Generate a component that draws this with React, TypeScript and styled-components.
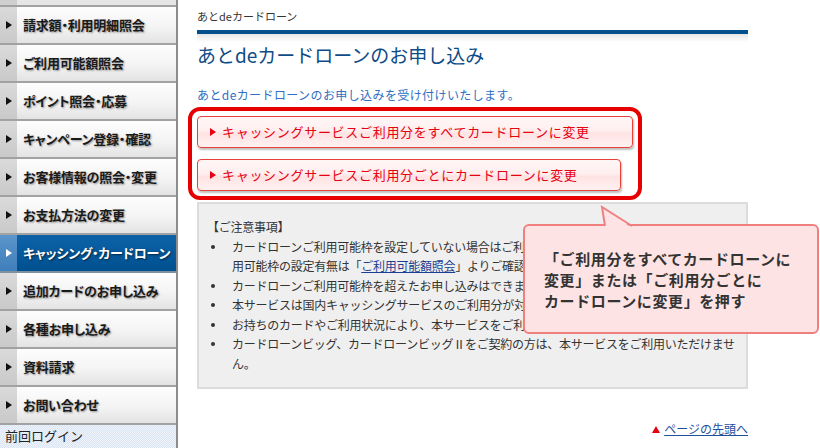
import React from "react"
import styled, { createGlobalStyle } from "styled-components"

const GlobalStyle = createGlobalStyle`
  html, body {
    margin: 0;
    padding: 0;
    background: #fff;
    overflow: hidden;
  }
  body {
    font-family: "Noto Sans CJK JP", "Noto Sans", sans-serif;
    color: #333;
  }
`

const navItems = [
  "請求額・利用明細照会",
  "ご利用可能額照会",
  "ポイント照会・応募",
  "キャンペーン登録・確認",
  "お客様情報の照会・変更",
  "お支払方法の変更",
  "キャッシング・カードローン",
  "追加カードのお申し込み",
  "各種お申し込み",
  "資料請求",
  "お問い合わせ",
]
const activeIndex = 6

const Page = styled.div`
  display: flex;
  width: 820px;
  height: 448px;
`

const Sidebar = styled.nav`
  width: 176px;
  flex-shrink: 0;
  display: flex;
  flex-direction: column;
  border-right: 2px solid #8c8c8c;
  background: repeating-conic-gradient(#d9e4f2 0 25%, #f1f5fb 0 50%) 0 0 / 2px 2px;
`

const NavStub = styled.div`
  height: 5px;
  border-bottom: 2px solid #a2a2a2;
  background: linear-gradient(to right, #cfcfcf 0 17px, #e6e6e6 17px);
`

const NavRow = styled.div<{ $active?: boolean }>`
  display: flex;
  height: 36px;
  border-bottom: 2px solid ${p => (p.$active ? "#7e8fa0" : "#a2a2a2")};
  background: ${p =>
    p.$active
      ? "linear-gradient(to bottom, #0d62a8, #00508f)"
      : "linear-gradient(to bottom, #fdfdfd 0%, #f4f4f4 55%, #e3e3e3 100%)"};
`

const NavStrip = styled.div<{ $active?: boolean }>`
  width: 17px;
  flex-shrink: 0;
  display: flex;
  align-items: center;
  justify-content: center;
  background: ${p =>
    p.$active
      ? "linear-gradient(to bottom, #5b95cb, #3f7fba)"
      : "linear-gradient(to bottom, #dadada, #c9c9c9)"};

  &::before {
    content: "";
    border-style: solid;
    border-width: 4px 0 4px 6px;
    border-color: transparent transparent transparent ${p => (p.$active ? "#fff" : "#111")};
  }
`

const NavLabel = styled.span<{ $active?: boolean }>`
  padding-left: 6px;
  line-height: 36px;
  font-size: 13px;
  font-weight: bold;
  font-feature-settings: "palt";
  letter-spacing: -0.2px;
  white-space: nowrap;
  color: ${p => (p.$active ? "#fff" : "#1a1a1a")};
  text-shadow: ${p =>
    p.$active ? "1px 1px 2px rgba(0,0,0,0.6)" : "1px 1px 2px rgba(0,0,0,0.4)"};
`

const LastLogin = styled.div`
  padding-left: 5px;
  line-height: 22px;
  font-size: 13px;
  color: #222;
`

const Main = styled.main`
  position: relative;
  flex: 1;
  padding-left: 19px;
`

const Column = styled.div`
  width: 551px;
  display: flex;
  flex-direction: column;
`

const Breadcrumb = styled.div`
  margin-top: 8px;
  line-height: 16px;
  font-size: 11px;
  color: #333;
`

const TitleRule = styled.div`
  margin-top: 6px;
  height: 8px;
  border-top: 4px solid #00508f;
  background: linear-gradient(to bottom, #e4e4e4, #fff);
`

const Title = styled.h1`
  margin: 0;
  line-height: 26px;
  font-size: 19px;
  font-weight: normal;
  color: #0d4c86;
`

const Intro = styled.p`
  margin: 18px 0 0;
  line-height: 18px;
  font-size: 12px;
  letter-spacing: 0.4px;
  color: #2f6fc2;
`

const ButtonGroup = styled.div`
  position: relative;
  align-self: flex-start;
  margin-top: 12px;
  display: flex;
  flex-direction: column;
  align-items: flex-start;
  gap: 11px;
`

const HighlightFrame = styled.div`
  position: absolute;
  inset: -9px;
  border: 4px solid #e60000;
  border-radius: 12px;
  pointer-events: none;
`

const ChangeButton = styled.button`
  display: flex;
  align-items: center;
  gap: 6px;
  height: 32px;
  padding: 0 42px 0 12px;
  border: 1px solid #e8403a;
  border-radius: 4px;
  background: linear-gradient(
    to bottom,
    #fff6f6 0%,
    #ffefef 45%,
    #ffe3e3 55%,
    #fff1f1 100%
  );
  box-shadow: 1px 2px 2px rgba(0, 0, 0, 0.25);
  font-family: inherit;
  font-size: 13px;
  letter-spacing: 0.7px;
  line-height: 18px;
  color: #e60012;
  cursor: pointer;

  &::before {
    content: "";
    border-style: solid;
    border-width: 4px 0 4px 6px;
    border-color: transparent transparent transparent #e60012;
  }
`

const NoticeBox = styled.section`
  margin-top: 11px;
  padding: 13px 9px 14px 8px;
  border: 2px solid #dcdcdc;
  background: #efefef;
  font-size: 12px;
  line-height: 19.5px;
  letter-spacing: -0.25px;
  color: #333;
`

const NoticeHeading = styled.div``

const NoticeList = styled.ul`
  margin: 0;
  padding: 0 0 0 25px;
  list-style: none;
`

const NoticeItem = styled.li`
  position: relative;

  &::before {
    content: "";
    position: absolute;
    left: -21px;
    top: 8px;
    width: 4px;
    height: 4px;
    border-radius: 50%;
    background: #333;
  }
`

const InlineLink = styled.a`
  color: #1a3f92;
  text-decoration: underline;
`

const PageTop = styled.div`
  margin-top: 32px;
  display: flex;
  justify-content: flex-end;
  align-items: center;
  gap: 4px;
  line-height: 16px;
  font-size: 12px;

  &::before {
    content: "";
    border-style: solid;
    border-width: 0 4px 7px 4px;
    border-color: transparent transparent #e60012 transparent;
  }
`

const PageTopLink = styled.a`
  color: #1d4f9c;
  text-decoration: underline;
`

const Callout = styled.div`
  position: absolute;
  left: 345px;
  top: 224px;
  width: 296px;
  height: 110px;
  box-sizing: border-box;
  padding: 22px 8px 0 19px;
  border: 2px solid #f08080;
  border-radius: 6px;
  background: #fde3e3;
  font-size: 15px;
  font-weight: bold;
  letter-spacing: 0.6px;
  line-height: 21px;
  color: #333;
`

const CalloutTail = styled.svg`
  position: absolute;
  left: 68px;
  top: -21px;
  width: 42px;
  height: 23px;
  overflow: visible;
`

export default function App(): JSX.Element {
  return (
    <>
      <GlobalStyle />
      <Page>
        <Sidebar>
          <NavStub />
          {navItems.map((label, i) => (
            <NavRow key={label} $active={i === activeIndex}>
              <NavStrip $active={i === activeIndex} />
              <NavLabel $active={i === activeIndex}>{label}</NavLabel>
            </NavRow>
          ))}
          <LastLogin>前回ログイン</LastLogin>
        </Sidebar>
        <Main>
          <Column>
            <Breadcrumb>あとdeカードローン</Breadcrumb>
            <TitleRule />
            <Title>あとdeカードローンのお申し込み</Title>
            <Intro>あとdeカードローンのお申し込みを受け付けいたします。</Intro>
            <ButtonGroup>
              <ChangeButton>キャッシングサービスご利用分をすべてカードローンに変更</ChangeButton>
              <ChangeButton>キャッシングサービスご利用分ごとにカードローンに変更</ChangeButton>
              <HighlightFrame />
            </ButtonGroup>
            <NoticeBox>
              <NoticeHeading>【ご注意事項】</NoticeHeading>
              <NoticeList>
                <NoticeItem>
                  カードローンご利用可能枠を設定していない場合はご利用いただけません。カードローンのご利用可能枠の設定有無は「
                  <InlineLink href="#">ご利用可能額照会</InlineLink>
                  」よりご確認ください。
                </NoticeItem>
                <NoticeItem>カードローンご利用可能枠を超えたお申し込みはできません。</NoticeItem>
                <NoticeItem>本サービスは国内キャッシングサービスのご利用分が対象となります。</NoticeItem>
                <NoticeItem>
                  お持ちのカードやご利用状況により、本サービスをご利用いただけない場合があります。
                </NoticeItem>
                <NoticeItem>
                  カードローンビッグ、カードローンビッグⅡをご契約の方は、本サービスをご利用いただけません。
                </NoticeItem>
              </NoticeList>
            </NoticeBox>
            <PageTop>
              <PageTopLink href="#">ページの先頭へ</PageTopLink>
            </PageTop>
          </Column>
          <Callout>
            <CalloutTail viewBox="0 0 42 23">
              <polygon points="12,23 9,2 39,23" fill="#fde3e3" />
              <polyline points="12,21 9,2 39,21" fill="none" stroke="#f08080" strokeWidth="2" />
            </CalloutTail>
            「ご利用分をすべてカードローンに
            <br />
            変更」または「ご利用分ごとに
            <br />
            カードローンに変更」を押す
          </Callout>
        </Main>
      </Page>
    </>
  )
}
